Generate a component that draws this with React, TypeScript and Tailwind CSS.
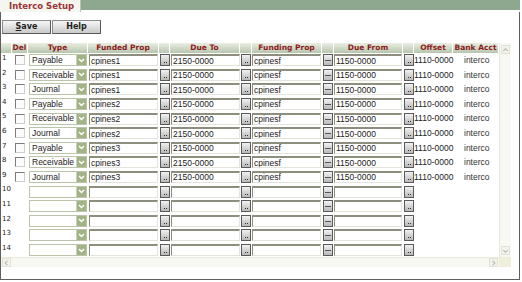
import React from 'react';

// Interco setup grid
const cols =
  'grid grid-cols-[11px_16px_60px_71px_11px_70px_12px_70px_12px_69px_11px_39px_46px]';

const headers = ['', 'Del', 'Type', 'Funded Prop', '', 'Due To', '', 'Funding Prop', '', 'Due From', '', 'Offset', 'Bank Acct'];

type Row = { type: string; funded: string };

const filled: Row[] = [
  { type: 'Payable', funded: 'cpines1' },
  { type: 'Receivable', funded: 'cpines1' },
  { type: 'Journal', funded: 'cpines1' },
  { type: 'Payable', funded: 'cpines2' },
  { type: 'Receivable', funded: 'cpines2' },
  { type: 'Journal', funded: 'cpines2' },
  { type: 'Payable', funded: 'cpines3' },
  { type: 'Receivable', funded: 'cpines3' },
  { type: 'Journal', funded: 'cpines3' },
];

function Lookup({ dash = false }: { dash?: boolean }) {
  return (
    <div className="w-[10px] h-[12px] border border-[#5a5a5a] bg-linear-to-b from-[#f2f2f2] to-[#b9b9b9] flex items-end justify-center pb-[2px]">
      {dash ? (
        <span className="w-[6px] h-[1px] bg-[#555] mb-[2px]" />
      ) : (
        <span className="flex gap-[1px]">
          <span className="w-[1px] h-[1px] bg-[#333]" />
          <span className="w-[1px] h-[1px] bg-[#333]" />
        </span>
      )}
    </div>
  );
}

function Field({ value, w }: { value?: string; w: string }) {
  return (
    <div
      className={`${w} h-[12px] bg-white border-t-2 border-l border-t-[#8e8e7e] border-l-[#8e8e7e] border-b border-r border-b-[#e4e4dc] border-r-[#e4e4dc] pl-[1px] flex items-center text-[8.5px] leading-none text-[#222] overflow-hidden whitespace-nowrap`}
    >
      {value}
    </div>
  );
}

function TypeSelect({ value }: { value?: string }) {
  return (
    <div className="w-[58px] h-[12px] border border-[#b9c4a8] bg-white flex items-stretch">
      <span className="flex-1 pl-[2px] flex items-center text-[8.5px] leading-none text-[#222] whitespace-nowrap overflow-hidden">
        {value}
      </span>
      <span className="w-[10px] bg-[#a2b388] border-l border-[#c9d3b8] flex items-center justify-center">
        <svg width="7" height="5" viewBox="0 0 7 5">
          <path d="M1 1 L3.5 3.5 L6 1" stroke="#fff" strokeWidth="1.4" fill="none" />
        </svg>
      </span>
    </div>
  );
}

function Check() {
  return (
    <div className="w-[10px] h-[10px] border border-t-[#7c7c7c] border-l-[#7c7c7c] border-b-[#cfcfcf] border-r-[#cfcfcf] bg-[#fbfbfb]" />
  );
}

function ScrollArrow({ dir }: { dir: 'up' | 'down' | 'left' | 'right' }) {
  const d = {
    up: 'M1.5 5 L4 2.5 L6.5 5',
    down: 'M1.5 3 L4 5.5 L6.5 3',
    left: 'M5 1.5 L2.5 4 L5 6.5',
    right: 'M3 1.5 L5.5 4 L3 6.5',
  }[dir];
  return (
    <div className="w-[9px] h-[9px] border border-[#e2e2d6] bg-[#f3f3ec] flex items-center justify-center">
      <svg width="8" height="8" viewBox="0 0 8 8">
        <path d={d} stroke="#b4b4aa" strokeWidth="1.2" fill="none" />
      </svg>
    </div>
  );
}

function GridRow({ n, row }: { n: number; row?: Row }) {
  return (
    <div className={`${cols} h-[14.6px] items-center`}>
      <span className="self-start pt-[2px] pl-[1px] text-[7px] leading-none text-[#222] font-['DejaVu_Sans',sans-serif]">
        {n}
      </span>
      <div className="flex justify-center">{row && <Check />}</div>
      <div className="pl-[1px]">
        <TypeSelect value={row?.type} />
      </div>
      <div className="pl-[1px]">
        <Field w="w-[69px]" value={row?.funded} />
      </div>
      <div className="pl-[1px]">
        <Lookup />
      </div>
      <div className="pl-[1px]">
        <Field w="w-[69px]" value={row ? '2150-0000' : ''} />
      </div>
      <div className="pl-[1px]">
        <Lookup />
      </div>
      <div>
        <Field w="w-[69px]" value={row ? 'cpinesf' : ''} />
      </div>
      <div className="pl-[1px]">
        <Lookup dash />
      </div>
      <div>
        <Field w="w-[68px]" value={row ? '1150-0000' : ''} />
      </div>
      <div className="pl-[1px]">
        <Lookup />
      </div>
      <span className="text-[8.5px] leading-none text-[#222] whitespace-nowrap">{row ? '1110-0000' : ''}</span>
      <span className="pl-[11px] text-[8.5px] leading-none text-[#333]">{row ? 'interco' : ''}</span>
    </div>
  );
}

export default function App() {
  const rows = Array.from({ length: 14 }, (_, i) => i);

  return (
    <div className="w-[522px] h-[282px] bg-white font-['Liberation_Sans',sans-serif]">
      <div className="w-[520px] h-[280px] flex flex-col">
        {/* Title tab */}
        <div className="flex h-[12px] shrink-0">
          <div className="w-[81px] h-[12px] bg-[#f6f6f1] border-r border-[#b8c4b4] pl-[9px] flex items-center text-[8.5px] font-bold leading-none text-[#9b3434] font-['DejaVu_Sans',sans-serif]">
            Interco Setup
          </div>
          <div className="flex-1 h-[10px] bg-[#8ea78f]" />
        </div>

        <div className="flex-1 border-x border-b border-[#5f5f5f] flex flex-col">
          {/* Toolbar */}
          <div className="flex gap-[1px] pl-[1px] pt-[8px]">
            <button className="w-[49px] h-[14px] border border-[#8a8a8a] border-b-[#5a5a5a] border-r-[#5a5a5a] bg-linear-to-b from-[#f7f7f7] to-[#c9c9c9] text-[8px] font-bold leading-none text-[#222] font-['DejaVu_Sans',sans-serif]">
              <span className="underline">S</span>ave
            </button>
            <button className="w-[49px] h-[14px] border border-[#8a8a8a] border-b-[#5a5a5a] border-r-[#5a5a5a] bg-linear-to-b from-[#f7f7f7] to-[#c9c9c9] text-[8px] font-bold leading-none text-[#222] font-['DejaVu_Sans',sans-serif]">
              Help
            </button>
          </div>

          {/* Grid pane */}
          <div className="mt-[9px] w-[510px] flex flex-col">
            <div className="flex">
              <div className="w-[498px]">
                <div className={`${cols} h-[10px]`}>
                  {headers.map((h, i) => (
                    <div
                      key={i}
                      className="h-[10px] bg-linear-to-b from-[#e9eee2] to-[#b7c5ae] border-r border-white flex items-center justify-center text-[7.5px] font-bold leading-none text-[#8b1a1a] whitespace-nowrap font-['DejaVu_Sans',sans-serif]"
                    >
                      {h}
                    </div>
                  ))}
                </div>
                {rows.map((i) => (
                  <GridRow key={i} n={i + 1} row={filled[i]} />
                ))}
              </div>
              {/* Vertical scrollbar */}
              <div className="w-[12px] bg-[#f8f9f3] border-l border-[#e6e8da] flex flex-col justify-between items-center py-[2px]">
                <ScrollArrow dir="up" />
                <ScrollArrow dir="down" />
              </div>
            </div>
            {/* Horizontal scrollbar */}
            <div className="flex h-[10px]">
              <div className="w-[498px] bg-[#f8f8f2] border-t border-[#ebebdf] flex items-center justify-between px-[1px]">
                <ScrollArrow dir="left" />
                <ScrollArrow dir="right" />
              </div>
              <div className="w-[12px] bg-[#efeedb]" />
            </div>
          </div>
        </div>
      </div>
    </div>
  );
}
